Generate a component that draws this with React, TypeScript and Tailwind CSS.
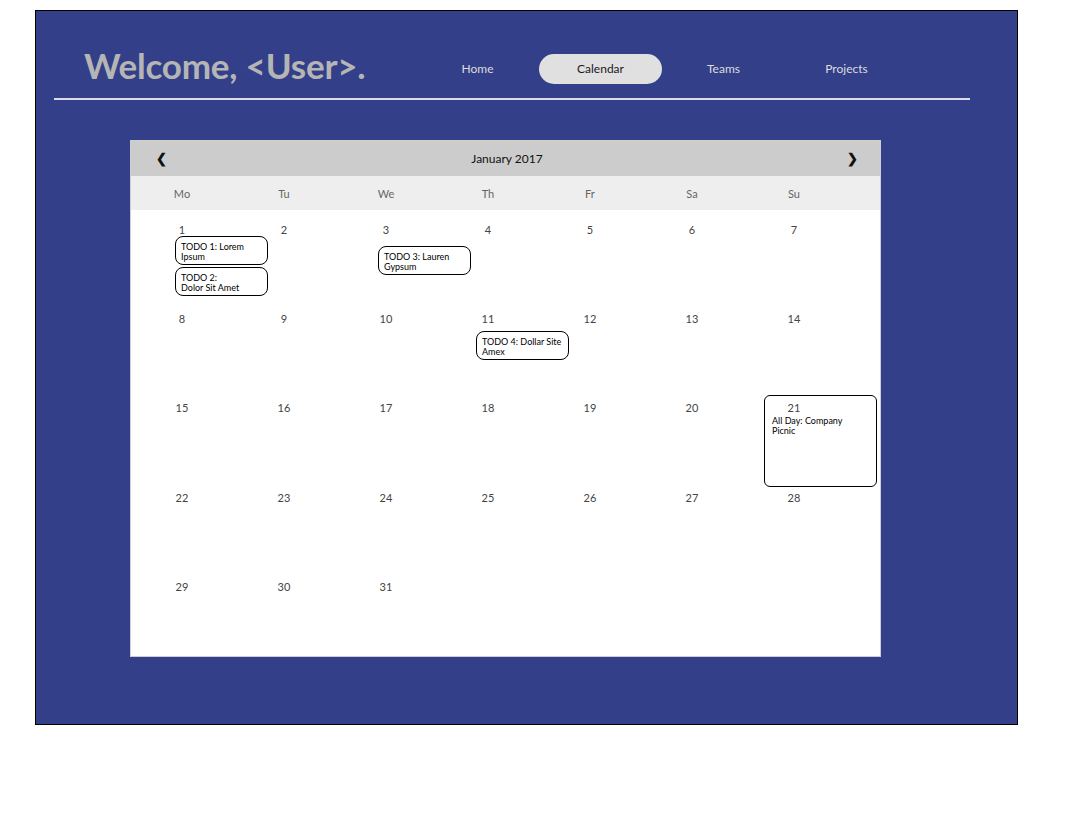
import React from "react";

type Ev = { text: string[]; ml: number; mt: number };

const days: (number | null)[] = [];
for (let i = 1; i <= 35; i++) days.push(i <= 31 ? i : null);

const events: Record<number, Ev[]> = {
  1: [
    { text: ["TODO 1: Lorem", "Ipsum"], ml: 44, mt: 0 },
    { text: ["TODO 2:", "Dolor Sit Amet"], ml: 44, mt: 2 },
  ],
  3: [{ text: ["TODO 3: Lauren", "Gypsum"], ml: 43, mt: 10 }],
  11: [{ text: ["TODO 4: Dollar Site", "Amex"], ml: 39, mt: 6 }],
};

function EventBox({ ev }: { ev: Ev }) {
  return (
    <div
      className="w-[93px] h-[29px] border border-black rounded-[8px] px-[5px] pt-[5px] text-[9px] leading-[10px] text-black text-left"
      style={{ marginLeft: ev.ml, marginTop: ev.mt }}
    >
      {ev.text.map((t, i) => (
        <div key={i} className="whitespace-nowrap">{t}</div>
      ))}
    </div>
  );
}

export default function App() {
  const nav = ["Home", "Calendar", "Teams", "Projects"];
  const weekdays = ["Mo", "Tu", "We", "Th", "Fr", "Sa", "Su"];
  return (
    <div
      className="w-[1082px] h-[824px] bg-white pt-[10px] pl-[35px]"
      style={{ fontFamily: "Lato, 'Noto Sans', sans-serif" }}
    >
      <div className="w-[983px] h-[715px] border border-black bg-[#334089] flex flex-col">
        <div className="flex h-[87px]">
          <div className="w-[380px] pl-[48px] pt-[34px]">
            <div className="text-[35px] leading-[40px] font-bold text-[#b5b5b5] whitespace-nowrap tracking-[-0.2px]">
              Welcome, &lt;User&gt;.
            </div>
          </div>
          <div className="flex pt-[43px]">
            {nav.map((n) => (
              <div
                key={n}
                className={
                  "w-[123px] h-[30px] flex items-center justify-center text-[12px] rounded-full " +
                  (n === "Calendar" ? "bg-[#e0e0e0] text-[#1a1a1a]" : "text-[#dcdcdc]")
                }
              >
                {n}
              </div>
            ))}
          </div>
        </div>
        <div className="ml-[18px] w-[916px] h-[2px] bg-[#dcdce6]" />
        <div className="ml-[94px] mt-[40px] w-[751px] h-[517px] bg-white border border-[#cfcfcf] flex flex-col">
          <div className="h-[36px] pt-[1px] bg-[#cccccc] flex items-center justify-between pl-[25px] pr-[22px] text-[12px] text-[#111]">
            <span className="text-[13px] font-bold">❮</span>
            <span>January 2017</span>
            <span className="text-[13px] font-bold">❯</span>
          </div>
          <div className="h-[35px] pt-[2px] bg-[#eeeeee] grid grid-cols-[repeat(7,102px)] items-center text-[11px] text-[#666]">
            {weekdays.map((d) => (
              <div key={d} className="text-center">{d}</div>
            ))}
          </div>
          <div className="grid grid-cols-[repeat(7,102px)] grid-rows-[repeat(5,89.2px)]">
            {days.map((d, i) => (
              <div key={i} className="relative pt-[14px]">
                {d !== null && (
                  <>
                    <div className="text-center text-[11px] leading-[12px] text-[#444]">{d}</div>
                    {(events[d] || []).map((ev, j) => (
                      <EventBox key={j} ev={ev} />
                    ))}
                    {d === 21 && (
                      <div className="absolute left-[21px] top-[7px] w-[113px] h-[92px] border border-black rounded-[6px] pl-[7px] pt-[20px] text-[9px] leading-[10px] text-black">
                        <div>All Day: Company</div>
                        <div>Picnic</div>
                      </div>
                    )}
                  </>
                )}
              </div>
            ))}
          </div>
        </div>
      </div>
    </div>
  );
}
